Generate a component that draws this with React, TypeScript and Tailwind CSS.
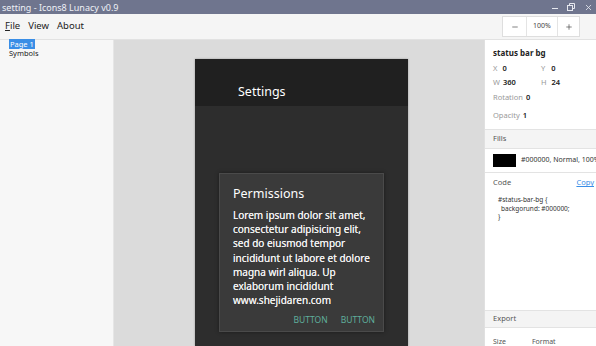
import { X, Minus, Plus } from "lucide-react";

const FONT = "font-['Noto_Sans','Open_Sans',sans-serif]";

function Section({ label, h = "h-[20px]" }: { label: string; h?: string }) {
  return (
    <div className={`flex ${h} items-center border-y border-[#e3e3e3] bg-[#f4f4f4] pl-[8px] text-[7.5px] text-[#555]`}>
      <span>{label}</span>
    </div>
  );
}

export default function App() {
  return (
    <div className={`flex h-[346px] w-[596px] flex-col overflow-hidden bg-white ${FONT}`}>
      {/* title bar */}
      <div className="flex h-[14px] items-center justify-between bg-[#6f758e] pl-[2px] pr-[3px] text-[9px] leading-none text-[#eef0f6]">
        <span>setting - Icons8 Lunacy v0.9</span>
        <div className="flex items-center gap-[9px] text-[#e6e8ef]">
          <span className="mt-[3px] h-[1.5px] w-[6px] bg-current" />
          <svg width="8" height="8" viewBox="0 0 8 8" fill="none" stroke="currentColor" strokeWidth="1">
            <rect x="0.5" y="2.5" width="5" height="5" />
            <path d="M2.5 2.5V0.5h5v5h-2" />
          </svg>
          <X size={9} strokeWidth={2.2} />
        </div>
      </div>

      {/* menu bar */}
      <div className="flex h-[26px] items-center justify-between border-b border-[#e2e2e2] bg-[#f5f5f5] pl-[5px] pr-[16px] text-[9.5px] text-[#222]">
        <div className="flex gap-[8px]">
          <span>
            <span className="underline">F</span>ile
          </span>
          <span>View</span>
          <span>About</span>
        </div>
        <div className="flex h-[21px] border border-[#dedede] bg-white text-[7px] text-[#444]">
          <div className="flex w-[24px] items-center justify-center border-r border-[#e4e4e4]">
            <Minus size={8} strokeWidth={2} />
          </div>
          <div className="flex w-[31px] items-center justify-center border-r border-[#e4e4e4]">100%</div>
          <div className="flex w-[21px] items-center justify-center">
            <Plus size={8} strokeWidth={2} />
          </div>
        </div>
      </div>

      <div className="flex min-h-0 flex-1">
        {/* pages */}
        <div className="w-[114px] border-r border-[#e6e6e6] bg-[#f7f7f7] pl-[9px] text-[7.5px] leading-[9px] text-[#222]">
          <div>
            <span className="bg-[#3a8ee6] px-[1px] text-white">Page 1</span>
          </div>
          <div>Symbols</div>
        </div>

        {/* canvas */}
        <div className="flex-1 bg-[#dbdbdb] pl-[81px] pt-[19px]">
          <div className="flex h-full w-[213px] flex-col bg-[#2d2d2d] shadow-[0_0_2px_rgba(0,0,0,0.3)]">
            <div className="flex h-[47px] items-center bg-[#202020] pl-[43px] pt-[19px] text-[12.5px] text-white">
              Settings
            </div>
            <div className="pl-[24px] pt-[67px]">
              <div className="h-[159px] w-[165px] border border-[#4a4a4a] bg-[#3a3a3a] pl-[13px] pt-[11px] shadow-[0_0_4px_rgba(0,0,0,0.4)]">
                <div className="text-[12.5px] leading-[18px] text-white">Permissions</div>
                <div className="mt-[5px] text-[10px] leading-[14.2px] text-[#f0f0f0] [text-shadow:0_0_0.4px_#f0f0f0]">
                  Lorem ipsum dolor sit amet,
                  <br />
                  consectetur adipisicing elit,
                  <br />
                  sed do eiusmod tempor
                  <br />
                  incididunt ut labore et dolore
                  <br />
                  magna wirl aliqua. Up
                  <br />
                  exlaborum incididunt
                  <br />
                  www.shejidaren.com
                </div>
                <div className="mt-[7px] flex justify-end gap-[13px] pr-[8px] text-[8.5px] text-[#5fae9c]">
                  <span>BUTTON</span>
                  <span>BUTTON</span>
                </div>
              </div>
            </div>
          </div>
        </div>

        {/* inspector */}
        <div className="flex w-[112px] flex-col border-l border-[#e0e0e0] bg-white text-[7.5px] text-[#222]">
          <div className="px-[8px] pt-[8px]">
            <div className="text-[8px] font-bold leading-[10px]">status bar bg</div>
            <div className="mt-[5px] grid grid-cols-[48px_1fr] gap-y-[4px] leading-[10px]">
              <div>
                <span className="text-[#999]">X</span>
                <span className="ml-[5px] font-semibold">0</span>
              </div>
              <div>
                <span className="text-[#999]">Y</span>
                <span className="ml-[6px] font-semibold">0</span>
              </div>
              <div>
                <span className="text-[#999]">W</span>
                <span className="ml-[3px] font-semibold">360</span>
              </div>
              <div>
                <span className="text-[#999]">H</span>
                <span className="ml-[5px] font-semibold">24</span>
              </div>
            </div>
            <div className="mt-[5px] leading-[10px]">
              <span className="text-[#999]">Rotation</span>
              <span className="ml-[3px] font-semibold">0</span>
            </div>
            <div className="mt-[8px] leading-[10px]">
              <span className="text-[#999]">Opacity</span>
              <span className="ml-[3px] font-semibold">1</span>
            </div>
          </div>
          <div className="mt-[9px]">
            <Section label="Fills" />
          </div>
          <div className="flex h-[24px] items-center gap-[5px] overflow-hidden border-b border-[#e3e3e3] pl-[8px] text-[7px] whitespace-nowrap text-[#333]">
            <div className="h-[13px] w-[23px] shrink-0 bg-black" />
            <span>#000000, Normal, 100%</span>
          </div>
          <div className="flex h-[20px] items-center justify-between pl-[8px] pr-[2px] text-[7.5px] text-[#555]">
            <span>Code</span>
            <span className="text-[#3a8ee6] underline">Copy</span>
          </div>
          <div className="pl-[13px] pt-[3px] text-[6.5px] leading-[8.6px] text-[#333]">
            <div>#status-bar-bg {"{"}</div>
            <div className="pl-[3px]">backgorund: #000000;</div>
            <div>{"}"}</div>
          </div>
          <div className="mt-auto">
            <Section label="Export" h="h-[18px]" />
            <div className="flex h-[18px] items-end gap-[26px] pl-[8px] text-[7px] leading-[9px] text-[#555]">
              <span>Size</span>
              <span>Format</span>
            </div>
          </div>
        </div>
      </div>
    </div>
  );
}
